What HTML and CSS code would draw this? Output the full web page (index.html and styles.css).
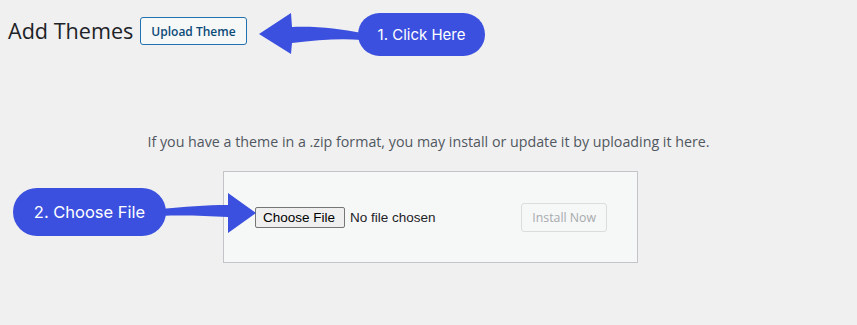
FILE: index.html
```html
<!DOCTYPE html>
<html>
<head>
<meta charset="utf-8">
<link rel="stylesheet" href="styles.css">
</head>
<body>
<div class="page">
  <div class="head">
    <h1 class="title">Add Themes</h1>
    <button class="upload-btn">Upload Theme</button>
  </div>
  <p class="help">If you have a theme in a .zip format, you may install or update it by uploading it here.</p>
  <div class="upload-box">
    <div class="file">
      <span class="choose">Choose File</span>
      <span class="nofile">No file chosen</span>
    </div>
    <button class="install" disabled>Install Now</button>
  </div>

  <svg class="arrows" width="857" height="325" viewBox="0 0 857 325">
    <path fill="#3b50df" d="M259 34 L291 13 L292 27 C318 26 340 29 362 33 L362 40 C340 38 318 40 292 43 L291 54 Z"/>
    <path fill="#3b50df" d="M160 209 C185 207 205 205 228 205 L228 193 L256 213 L228 233 L228 217 C205 216 185 215 160 216 Z"/>
  </svg>
  <div class="pill pill1">1. Click Here</div>
  <div class="pill pill2">2. Choose File</div>
</div>
</body>
</html>
```

FILE: styles.css
```css
html, body {
  margin: 0;
  padding: 0;
  background: #f0f0f1;
}
.page {
  position: relative;
  width: 857px;
  height: 325px;
  overflow: hidden;
  font-family: "Open Sans", "Noto Sans", sans-serif;
  color: #1d2327;
}
.head {
  display: flex;
  align-items: center;
  gap: 7px;
  padding: 16px 0 0 8px;
}
.title {
  margin: 0;
  font-size: 21.6px;
  font-weight: 400;
  line-height: 30px;
  color: #1d2327;
}
.upload-btn {
  height: 28px;
  padding: 0 10px;
  border: 1px solid #2271b1;
  border-radius: 3px;
  background: #f6f7f7;
  color: #0a4b78;
  font-family: "Open Sans", "Noto Sans", sans-serif;
  font-size: 12px;
  font-weight: 600;
}
.help {
  margin: 86px 0 0 0;
  text-align: center;
  font-size: 14.25px;
  color: #50575e;
  line-height: 20px;
}
.upload-box {
  margin: 19px 0 0 223px;
  border: 1px solid #c3c4c7;
  background: #f6f7f7;
  display: flex;
  align-items: center;
  justify-content: space-between;
  padding: 0 30px 0 31px;
  box-sizing: border-box;
  width: 415px;
  height: 92px;
}
.file {
  display: flex;
  align-items: center;
  gap: 5px;
  font-family: "Liberation Sans", Arial, sans-serif;
  font-size: 13.5px;
}
.choose {
  display: inline-flex;
  align-items: center;
  height: 21px;
  padding: 0 7px;
  box-sizing: border-box;
  width: 90px;
  border: 1px solid #767676;
  border-radius: 2px;
  background: #efefef;
  color: #000;
}
.nofile {
  color: #1d2327;
}
.install {
  height: 29px;
  padding: 0 10px;
  border: 1px solid #dcdcde;
  border-radius: 3px;
  background: #f6f7f7;
  color: #a7aaad;
  font-family: "Open Sans", "Noto Sans", sans-serif;
  font-size: 12.3px;
}
.arrows {
  position: absolute;
  left: 0;
  top: 0;
}
.pill {
  position: absolute;
  display: flex;
  align-items: center;
  justify-content: center;
  background: #3b50df;
  color: #fff;
  font-family: Inter, "Noto Sans", sans-serif;
}
.pill1 {
  left: 358px;
  top: 13px;
  width: 127px;
  height: 43px;
  border-radius: 22px;
  font-size: 15px;
}
.pill2 {
  left: 13px;
  top: 188px;
  width: 153px;
  height: 48px;
  border-radius: 24px;
  font-size: 16.5px;
}
```
